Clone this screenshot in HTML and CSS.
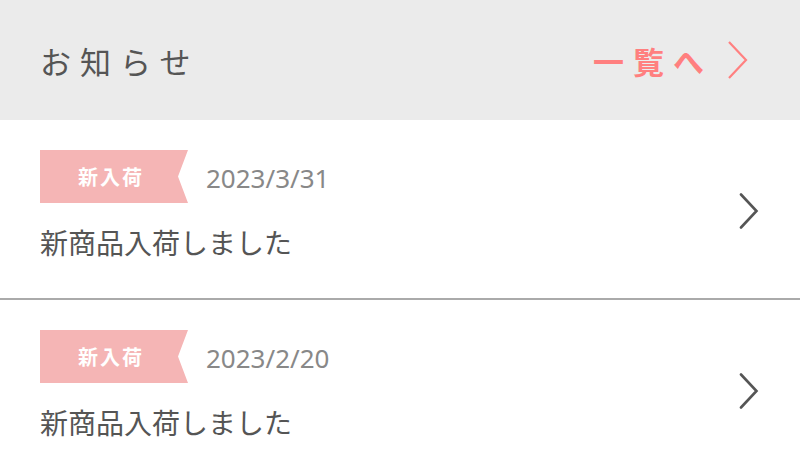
FILE: index.html
```html
<!DOCTYPE html>
<html lang="ja">
<head>
<meta charset="utf-8">
<link rel="stylesheet" href="styles.css">
</head>
<body>
<div class="news">
  <header class="news-head">
    <h2 class="news-title">お知らせ</h2>
    <a class="news-all" href="#">一覧へ
      <svg class="all-chev" width="22" height="38" viewBox="0 0 22 38"><path d="M2 1 L19 19 L2 37" fill="none" stroke="#ff8080" stroke-width="2.2"/></svg>
    </a>
  </header>
  <ul class="news-list">
    <li class="news-item">
      <div class="item-body">
        <div class="item-meta">
          <span class="tag">新入荷</span>
          <span class="date">2023/3/31</span>
        </div>
        <p class="item-text">新商品入荷しました</p>
      </div>
      <svg class="item-chev" width="20" height="36" viewBox="0 0 20 36"><path d="M2 1.5 L17.5 18 L2 34.5" fill="none" stroke="#555" stroke-width="2.6" stroke-linecap="round"/></svg>
    </li>
    <li class="news-item">
      <div class="item-body">
        <div class="item-meta">
          <span class="tag">新入荷</span>
          <span class="date">2023/2/20</span>
        </div>
        <p class="item-text">新商品入荷しました</p>
      </div>
      <svg class="item-chev" width="20" height="36" viewBox="0 0 20 36"><path d="M2 1.5 L17.5 18 L2 34.5" fill="none" stroke="#555" stroke-width="2.6" stroke-linecap="round"/></svg>
    </li>
  </ul>
</div>
</body>
</html>
```
FILE: styles.css
```css
* { box-sizing: border-box; }
html, body { margin: 0; padding: 0; background: #fff; }
body {
  font-family: "Noto Sans CJK JP", "Noto Sans", sans-serif;
  color: #555;
  width: 800px;
  height: 476px;
  overflow: hidden;
}
.news-head {
  height: 120px;
  background: #ebebeb;
  display: flex;
  align-items: center;
  justify-content: space-between;
  padding: 0 51px 0 40px;
}
.news-title {
  margin: 0;
  font-size: 31px;
  font-weight: 400;
  letter-spacing: 9px;
  color: #555;
  line-height: 1;
}
.news-all {
  display: flex;
  align-items: center;
  gap: 14px;
  color: #ff7f7f;
  text-decoration: none;
  font-size: 31px;
  font-weight: 700;
  letter-spacing: 9px;
  line-height: 1;
}
.news-list {
  list-style: none;
  margin: 0;
  padding: 0;
}
.news-item {
  height: 178px;
  display: flex;
  justify-content: space-between;
  padding: 30px 41px 0 40px;
  align-items: flex-start;
}
.news-item + .news-item {
  border-top: 2px solid #aaa;
  height: 180px;
}
.item-meta {
  display: flex;
  align-items: center;
  gap: 18px;
}
.tag {
  width: 148px;
  height: 53px;
  background: #f5b5b5;
  color: #fff;
  font-size: 20px;
  font-weight: 700;
  letter-spacing: 2px;
  display: flex;
  align-items: center;
  padding-left: 38px;
  clip-path: polygon(0 0, 100% 0, 138px 50%, 100% 100%, 0 100%);
}
.date {
  font-family: "Noto Sans", sans-serif;
  font-size: 26px;
  color: #888;
  margin-top: 2px;
}
.item-text {
  margin: 20px 0 0;
  font-size: 28px;
  line-height: 38px;
  color: #555;
}
.item-chev {
  margin-top: 43px;
}
```
